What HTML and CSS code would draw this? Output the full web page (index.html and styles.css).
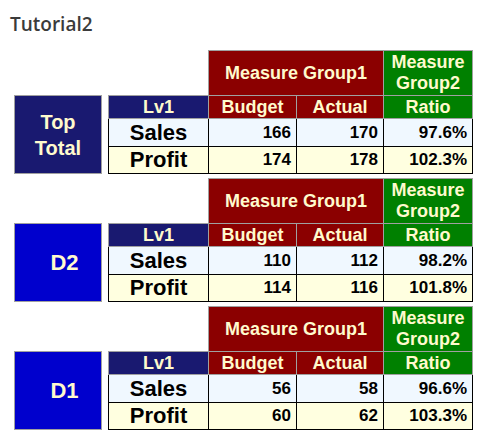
FILE: index.html
```html
<!DOCTYPE html>
<html>
<head>
<meta charset="utf-8">
<link rel="stylesheet" href="styles.css">
</head>
<body>
<h1 class="title">Tutorial2</h1>

<div class="section">
  <div class="dim dim-top">Top<br>Total</div>
  <table class="pivot">
    <colgroup><col class="c-lv"><col class="c-b"><col class="c-a"><col class="c-r"></colgroup>
    <tr class="h1"><td class="corner"></td><th colspan="2" class="mg1">Measure Group1</th><th class="mg2">Measure<br>Group2</th></tr>
    <tr class="h2"><th class="lv">Lv1</th><th class="mg1">Budget</th><th class="mg1">Actual</th><th class="mg2">Ratio</th></tr>
    <tr class="sales"><th class="row">Sales</th><td>166</td><td>170</td><td>97.6%</td></tr>
    <tr class="profit"><th class="row">Profit</th><td>174</td><td>178</td><td>102.3%</td></tr>
  </table>
</div>

<div class="section">
  <div class="dim dim-sub">D2</div>
  <table class="pivot">
    <colgroup><col class="c-lv"><col class="c-b"><col class="c-a"><col class="c-r"></colgroup>
    <tr class="h1"><td class="corner"></td><th colspan="2" class="mg1">Measure Group1</th><th class="mg2">Measure<br>Group2</th></tr>
    <tr class="h2"><th class="lv">Lv1</th><th class="mg1">Budget</th><th class="mg1">Actual</th><th class="mg2">Ratio</th></tr>
    <tr class="sales"><th class="row">Sales</th><td>110</td><td>112</td><td>98.2%</td></tr>
    <tr class="profit"><th class="row">Profit</th><td>114</td><td>116</td><td>101.8%</td></tr>
  </table>
</div>

<div class="section">
  <div class="dim dim-sub">D1</div>
  <table class="pivot">
    <colgroup><col class="c-lv"><col class="c-b"><col class="c-a"><col class="c-r"></colgroup>
    <tr class="h1"><td class="corner"></td><th colspan="2" class="mg1">Measure Group1</th><th class="mg2">Measure<br>Group2</th></tr>
    <tr class="h2"><th class="lv">Lv1</th><th class="mg1">Budget</th><th class="mg1">Actual</th><th class="mg2">Ratio</th></tr>
    <tr class="sales"><th class="row">Sales</th><td>56</td><td>58</td><td>96.6%</td></tr>
    <tr class="profit"><th class="row">Profit</th><td>60</td><td>62</td><td>103.3%</td></tr>
  </table>
</div>
</body>
</html>
```
FILE: styles.css
```css
html, body {
  margin: 0;
  padding: 0;
  background: #ffffff;
}

body {
  font-family: "Liberation Sans", Arial, sans-serif;
}

.title {
  margin: 0;
  padding: 12px 0 0 10px;
  height: 50px;
  box-sizing: border-box;
  font-family: "Open Sans", "Noto Sans", sans-serif;
  font-weight: 600;
  font-size: 19px;
  line-height: 24px;
  color: #3b3b3b;
}

.section {
  display: flex;
  align-items: flex-end;
  gap: 6px;
  margin: 0 0 4px 14px;
}

.dim {
  width: 88px;
  height: 79px;
  box-sizing: border-box;
  border: 1px solid #a0a0a0;
  display: flex;
  align-items: center;
  justify-content: center;
  text-align: center;
  font-weight: bold;
  color: #fffacd;
}

.dim-top {
  background: #191970;
  font-size: 20px;
  line-height: 26px;
}

.dim-sub {
  background: #0000cd;
  font-size: 22px;
  line-height: 26px;
  padding-left: 13px;
}

.pivot {
  border-collapse: collapse;
  table-layout: fixed;
  width: 364px;
}

.c-lv { width: 100px; }
.c-b { width: 88px; }
.c-a { width: 87px; }
.c-r { width: 89px; }

.pivot th,
.pivot td {
  padding: 0;
}

.pivot .corner {
  border: none;
  background: transparent;
}

.h1 th {
  height: 44px;
  font-size: 18px;
  line-height: 21px;
  color: #fffacd;
  border: 1px solid #a0a0a0;
}

.h2 th {
  height: 22px;
  font-size: 18px;
  line-height: 20px;
  color: #fffacd;
  border: 1px solid #a0a0a0;
}

.mg1 { background: #8b0000; }
.mg2 { background: #008000; }
.lv { background: #191970; }

.sales th,
.sales td {
  height: 27px;
  background: #f0f8ff;
}

.profit th,
.profit td {
  height: 26px;
  background: #ffffe0;
}

.sales th,
.sales td,
.profit th,
.profit td {
  border: 1px solid #000000;
  color: #000000;
}

.pivot .row {
  font-size: 22px;
  line-height: 24px;
  text-align: center;
}

.pivot td {
  font-size: 17px;
  font-weight: bold;
  text-align: right;
  padding-right: 5px;
  line-height: 20px;
}
```
